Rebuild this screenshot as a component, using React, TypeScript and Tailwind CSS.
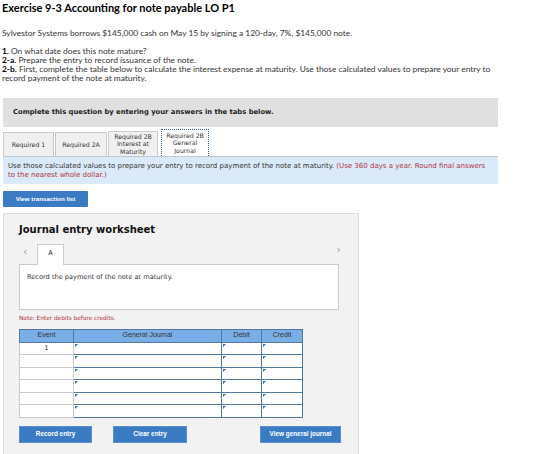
import React from "react";

const rows = ["1", "", "", "", "", ""];

function Cell({ w }: { w: string }) {
  return (
    <td className={`${w} h-[12.5px] border-[1.5px] border-[#5477a0] bg-white p-0 relative`}>
      <span className="absolute left-[1px] top-[1px] w-0 h-0 border-l-[3px] border-l-[#2f6fc0] border-b-[3px] border-b-transparent" />
    </td>
  );
}

export default function App() {
  return (
    <div className="w-[560px] h-[454px] bg-white overflow-hidden text-[#333]">
      <h1 className="pl-[2px] pt-[1px] text-[11px] font-bold leading-[14px] text-black font-['Lato',sans-serif]">
        Exercise 9-3 Accounting for note payable LO P1
      </h1>
      <div className="pl-[2px] font-['Lato',sans-serif] text-[8.4px] leading-[9px] text-[#333] whitespace-nowrap">
        <p className="mt-[14px]">
          Sylvestor Systems borrows $145,000 cash on May 15 by signing a 120-day, 7%, $145,000 note.
        </p>
        <p className="mt-[9px]">
          <b className="text-black">1.</b> On what date does this note mature?
        </p>
        <p>
          <b className="text-black">2-a.</b> Prepare the entry to record issuance of the note.
        </p>
        <p>
          <b className="text-black">2-b.</b> First, complete the table below to calculate the interest expense at maturity. Use those calculated values to prepare your entry to
          <br />
          record payment of the note at maturity.
        </p>
      </div>

      <div className="ml-[3px] w-[495px] mt-[15px] font-['DejaVu_Sans',sans-serif]">
        <div className="h-[29px] bg-[#e0e0e0] pl-[10px] flex items-center text-[6.8px] font-bold text-[#222]">
          Complete this question by entering your answers in the tabs below.
        </div>
        <div className="flex items-end h-[29px] text-[6.2px] leading-[7.5px] text-[#333]">
          <div className="w-[51px] h-[24px] bg-[#f0f0f0] border border-[#ccc] border-b-0 flex items-center justify-center">Required 1</div>
          <div className="w-[52px] h-[24px] ml-[1px] bg-[#f0f0f0] border border-[#ccc] border-b-0 flex items-center justify-center">Required 2A</div>
          <div className="w-[50px] h-[25px] ml-[1px] bg-[#f0f0f0] border border-[#ccc] border-b-0 flex items-center justify-center text-center">
            Required 2B
            <br />
            Interest at
            <br />
            Maturity
          </div>
          <div className="w-[48px] h-[27px] ml-[3px] bg-white border border-dotted border-[#2a5caa] border-b-0 flex items-center justify-center text-center">
            Required 2B
            <br />
            General
            <br />
            Journal
          </div>
        </div>
        <div className="h-[28px] bg-[#dbeaf8] border-t border-[#bcc8d4] pl-[5px] pt-[5px] text-[7px] leading-[9px] text-[#333] whitespace-nowrap">
          Use those calculated values to prepare your entry to record payment of the note at maturity.{" "}
          <span className="text-[#b0343e]">
            (Use 360 days a year. Round final answers
            <br />
            to the nearest whole dollar.)
          </span>
        </div>
      </div>

      <button className="ml-[3px] mt-[7px] w-[85px] h-[16px] bg-[#3b7bc4] rounded-[1px] text-white text-[6.2px] font-bold font-['Liberation_Sans',sans-serif] flex items-center justify-center">
        View transaction list
      </button>

      <div className="ml-[3px] mt-[6px] w-[356px] h-[250px] bg-[#f2f2f2] border border-[#dcdcdc] pl-[15px] pr-[17px]">
        <div className="pt-[10px] text-[10px] font-bold text-[#111] font-['DejaVu_Sans',sans-serif] leading-[12px]">
          Journal entry worksheet
        </div>
        <div className="mt-[7px] flex items-end h-[21px] font-['DejaVu_Sans',sans-serif]">
          <span className="w-[18px] pl-[4px] pb-[7px] text-[#999] text-[11px] leading-[11px]">‹</span>
          <div className="w-[27px] h-[21px] bg-white border border-[#ccc] border-b-0 flex items-start justify-center pt-[4px] text-[6.5px] text-[#222] relative top-[1px] z-10">
            A
          </div>
          <span className="ml-auto pb-[9px] text-[#999] text-[11px] leading-[11px]">›</span>
        </div>
        <div className="w-[320px] h-[46px] bg-white border border-[#ccc] pl-[7px] pt-[8px] text-[6.6px] text-[#333] font-['DejaVu_Sans',sans-serif]">
          Record the payment of the note at maturity.
        </div>
        <div className="mt-[4px] text-[5.8px] text-[#b0343e] font-['DejaVu_Sans',sans-serif]">
          Note: Enter debits before credits.
        </div>
        <table className="mt-[6px] border-collapse font-['Liberation_Sans',sans-serif] text-[7px] text-[#333]">
          <thead>
            <tr className="h-[13px] bg-[#7aaee6]">
              <th className="w-[54px] border-[1.5px] border-[#5477a0] font-normal p-0">Event</th>
              <th className="w-[148px] border-[1.5px] border-[#5477a0] font-normal p-0">General Journal</th>
              <th className="w-[40px] border-[1.5px] border-[#5477a0] font-normal p-0">Debit</th>
              <th className="w-[41px] border-[1.5px] border-[#5477a0] font-normal p-0">Credit</th>
            </tr>
          </thead>
          <tbody>
            {rows.map((r, i) => (
              <tr key={i}>
                <td className="w-[54px] h-[12.5px] border border-[#c9c9c9] bg-white text-center p-0 leading-[10px]">{r}</td>
                <Cell w="w-[148px]" />
                <Cell w="w-[40px]" />
                <Cell w="w-[41px]" />
              </tr>
            ))}
          </tbody>
        </table>
        <div className="mt-[8px] flex font-['Liberation_Sans',sans-serif] text-[6.4px] font-bold text-white">
          <button className="w-[74px] h-[17px] bg-[#3b7bc4] border border-[#5b8fd0]">Record entry</button>
          <button className="ml-[21px] w-[75px] h-[17px] bg-[#3b7bc4] border border-[#5b8fd0]">Clear entry</button>
          <button className="ml-[73px] w-[82px] h-[17px] bg-[#3b7bc4] border border-[#5b8fd0]">View general journal</button>
        </div>
      </div>
    </div>
  );
}
